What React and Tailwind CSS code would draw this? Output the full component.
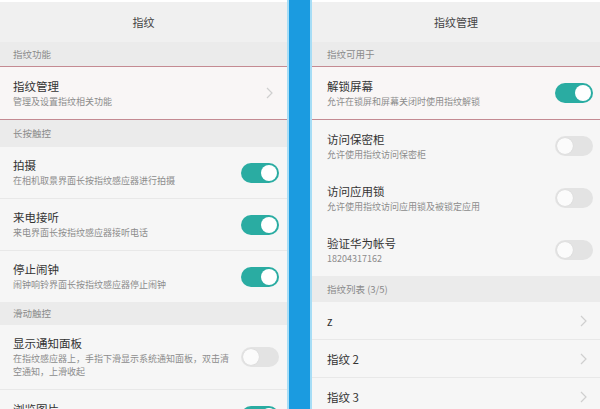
import React from "react";

const font = { fontFamily: '"Noto Sans CJK SC", "Noto Sans", sans-serif' };

function Toggle({ on }) {
  return on ? (
    <div className="w-[38px] h-[20px] rounded-full bg-[#2aaca2] flex items-center justify-end pr-[2px] shrink-0">
      <div className="size-[16px] rounded-full bg-white" />
    </div>
  ) : (
    <div className="w-[38px] h-[20px] rounded-full bg-[#e3e3e3] flex items-center pl-[2px] shrink-0">
      <div className="size-[16px] rounded-full bg-[#fbfbfb] shadow-[0_0_1px_rgba(0,0,0,0.15)]" />
    </div>
  );
}

function Chevron() {
  return (
    <svg width="7" height="12" viewBox="0 0 7 12" className="shrink-0 mr-[6px]">
      <polyline points="1,1 6,6 1,11" fill="none" stroke="#cfcfcf" strokeWidth="1.2" />
    </svg>
  );
}

function TopBar({ title }) {
  return (
    <div className="h-[42px] shrink-0 border-t-2 border-white bg-[#f0f0f0] flex items-center justify-center text-[11px] text-[#444]">
      {title}
    </div>
  );
}

function Header({ text, h }) {
  return (
    <div className={`${h} shrink-0 bg-[#ebebeb] flex items-center text-[9.5px] text-[#8a8a8a]`}>
      {text}
    </div>
  );
}

function Row({ title, desc, toggle, chevron, h, highlight, line, descWidth }) {
  return (
    <div
      className={`${h} shrink-0 flex items-center justify-between ${
        highlight ? "border-y border-[#c48a92] bg-[#f9f6f6]" : "bg-[#f6f6f6]"
      } ${line ? "border-b border-[#e8e8e8]" : ""}`}
    >
      <div className="flex flex-col gap-[2px]">
        <div className="text-[11.5px] leading-[14px] text-[#333]">{title}</div>
        {desc && (
          <div className={`text-[9px] leading-[13px] text-[#8c8c8c] ${descWidth || ""}`}>{desc}</div>
        )}
      </div>
      {toggle !== undefined && <Toggle on={toggle} />}
      {chevron && <Chevron />}
    </div>
  );
}

function LeftPanel() {
  return (
    <div className="w-[287px] shrink-0 flex flex-col bg-[#f6f6f6]">
      <TopBar title="指纹" />
      <div className="flex flex-col [&>*]:pl-[13px] [&>*]:pr-[8px]">
        <Header text="指纹功能" h="h-[24px]" />
        <Row title="指纹管理" desc="管理及设置指纹相关功能" chevron h="h-[54px]" highlight />
        <Header text="长按触控" h="h-[27px]" />
        <Row title="拍摄" desc="在相机取景界面长按指纹感应器进行拍摄" toggle h="h-[52px]" line />
        <Row title="来电接听" desc="来电界面长按指纹感应器接听电话" toggle h="h-[52px]" line />
        <Row title="停止闹钟" desc="闹钟响铃界面长按指纹感应器停止闹钟" toggle h="h-[51px]" />
        <Header text="滑动触控" h="h-[23px]" />
        <Row
          title="显示通知面板"
          desc="在指纹感应器上，手指下滑显示系统通知面板，双击清空通知，上滑收起"
          descWidth="w-[220px]"
          toggle={false}
          h="h-[65px]"
          line
        />
        <Row title="浏览图片" desc="查看图片时左右滑动指纹感应器切换图片" toggle h="h-[52px]" />
      </div>
    </div>
  );
}

function RightPanel() {
  return (
    <div className="flex-1 flex flex-col bg-[#f6f6f6]">
      <TopBar title="指纹管理" />
      <div className="flex flex-col [&>*]:pl-[15px] [&>*]:pr-[7px]">
        <Header text="指纹可用于" h="h-[24px]" />
        <Row title="解锁屏幕" desc="允许在锁屏和屏幕关闭时使用指纹解锁" toggle h="h-[54px]" highlight />
        <Row title="访问保密柜" desc="允许使用指纹访问保密柜" toggle={false} h="h-[52px]" />
        <Row title="访问应用锁" desc="允许使用指纹访问应用锁及被锁定应用" toggle={false} h="h-[52px]" />
        <Row title="验证华为帐号" desc="18204317162" toggle={false} h="h-[52px]" />
        <Header text="指纹列表 (3/5)" h="h-[26px]" />
        <Row title="z" chevron h="h-[38px]" line />
        <Row title="指纹 2" chevron h="h-[38px]" line />
        <Row title="指纹 3" chevron h="h-[38px]" />
      </div>
    </div>
  );
}

export default function App() {
  return (
    <div className="w-[600px] h-[409px] overflow-hidden flex bg-[#f6f6f6]" style={font}>
      <LeftPanel />
      <div className="w-[25px] shrink-0 bg-[#1b9be0] border-x-2 border-[#a6ddf6]" />
      <RightPanel />
    </div>
  );
}
